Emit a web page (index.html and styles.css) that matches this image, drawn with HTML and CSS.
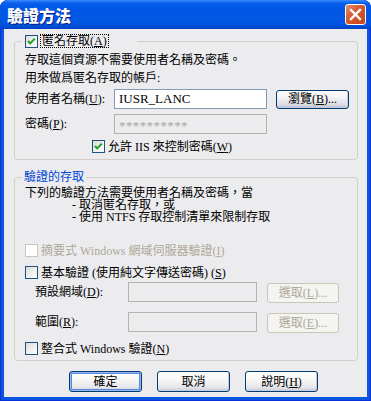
FILE: index.html
```html
<!DOCTYPE html>
<html lang="zh-Hant">
<head>
<meta charset="utf-8">
<title>驗證方法</title>
<link rel="stylesheet" href="styles.css">
</head>
<body>
<div class="window">
  <div class="titlebar">
    <span class="title">驗證方法</span>
    <span class="close"><svg width="19" height="19" viewBox="0 0 19 19"><path d="M5 5 L14 14 M14 5 L5 14" stroke="#fff" stroke-width="2.4" stroke-linecap="square"/></svg></span>
  </div>
  <div class="client">
    <fieldset class="group g1">
      <legend class="legend-check">
        <span class="legend-inner">
          <span class="cb"><svg width="11" height="11" viewBox="0 0 11 11"><path d="M2 5 L4.2 7.4 L8.8 2.6" fill="none" stroke="#21A121" stroke-width="2"/></svg></span>
          <span class="focus">匿名存取(<u>A</u>)</span>
        </span>
      </legend>
      <div class="line l1">存取這個資源不需要使用者名稱及密碼。</div>
      <div class="line l2">用來做爲匿名存取的帳戶:</div>
      <div class="row r-user">
        <span class="lbl">使用者名稱(<u>U</u>):</span>
        <span class="input">IUSR_LANC</span>
        <span class="btn browse">瀏覽(<u>B</u>)...</span>
      </div>
      <div class="row r-pass">
        <span class="lbl">密碼(<u>P</u>):</span>
        <span class="input disabled pw">**********</span>
      </div>
      <div class="check iis">
        <span class="cb"><svg width="11" height="11" viewBox="0 0 11 11"><path d="M2 5 L4.2 7.4 L8.8 2.6" fill="none" stroke="#21A121" stroke-width="2"/></svg></span>
        <span class="ctext">允許 IIS 來控制密碼(<u>W</u>)</span>
      </div>
    </fieldset>

    <fieldset class="group g2">
      <legend class="legend-text">驗證的存取</legend>
      <p class="para">下列的驗證方法需要使用者名稱及密碼，當<br><span class="indent">- 取消匿名存取，或</span><br><span class="indent">- 使用 NTFS 存取控制清單來限制存取</span></p>
      <div class="check digest disabled-text">
        <span class="cb dis"></span>
        <span class="ctext">摘要式 Windows 網域伺服器驗證(<u>I</u>)</span>
      </div>
      <div class="check basic">
        <span class="cb"></span>
        <span class="ctext">基本驗證 (使用純文字傳送密碼) (<u>S</u>)</span>
      </div>
      <div class="row sub r-domain">
        <span class="lbl2">預設網域(<u>D</u>):</span>
        <span class="input disabled w2"></span>
        <span class="btn dis pick">選取(<u>L</u>)...</span>
      </div>
      <div class="row sub r-realm">
        <span class="lbl2">範圍(<u>R</u>):</span>
        <span class="input disabled w2"></span>
        <span class="btn dis pick">選取(<u>E</u>)...</span>
      </div>
      <div class="check integrated">
        <span class="cb"></span>
        <span class="ctext">整合式 Windows 驗證(<u>N</u>)</span>
      </div>
    </fieldset>

    <div class="buttons">
      <span class="btn dlg default">確定</span>
      <span class="btn dlg">取消</span>
      <span class="btn dlg">說明(<u>H</u>)</span>
    </div>
  </div>
</div>
</body>
</html>
```

FILE: styles.css
```css
html, body {
  margin: 0;
  padding: 0;
  background: #ffffff;
}
body {
  font-family: "Liberation Serif", "Noto Sans CJK TC", serif;
  font-size: 12px;
  line-height: 12px;
  color: #000;
}
u { text-decoration: underline; text-underline-offset: 1px; }

.window {
  width: 371px;
  height: 401px;
  display: flex;
  flex-direction: column;
  background: #0A56E0;
  border-radius: 8px 8px 0 0;
  box-shadow: inset 1px 0 0 #0831D9, inset -1px 0 0 #0831D9, inset 0 -1px 0 #0831D9;
  overflow: hidden;
}

.titlebar {
  height: 29px;
  flex: none;
  display: flex;
  align-items: center;
  justify-content: space-between;
  padding: 0 5px 0 7px;
  box-sizing: border-box;
  border-radius: 8px 8px 0 0;
  background: linear-gradient(#3A8CFF 0px, #0A5FEA 3px, #0058E6 8px, #0257E4 18px, #0054E3 24px, #0043C6 29px);
}
.title {
  color: #fff;
  font-family: "Noto Sans CJK TC", sans-serif;
  font-weight: 900;
  font-size: 16px;
  line-height: 16px;
  text-shadow: 1px 1px 0 #0A1E7A;
  margin-top: 1px;
}
.close {
  width: 21px;
  height: 21px;
  box-sizing: border-box;
  border: 1px solid #fff;
  border-radius: 3px;
  background: linear-gradient(135deg, #E88B68 0%, #D5592F 45%, #C5421B 100%);
  display: flex;
  align-items: center;
  justify-content: center;
}

.client {
  flex: 1;
  margin: 0 4px 4px 4px;
  background: #ECECEE;
  padding: 5px 9px 4px 10px;
  display: flex;
  flex-direction: column;
}

.group {
  margin: 0;
  border: 1px solid #D0D0C8;
  border-radius: 4px;
  padding: 0 10px 0 10px;
  min-width: 0;
}
.g1 { padding-bottom: 6px; }
.g2 { margin-top: 11px; padding-bottom: 5px; }

.legend-check {
  padding: 0 0 0 4px;
  margin-left: -4px;
  width: 116px;
  box-sizing: border-box;
  height: 14px;
}
.legend-inner {
  display: flex;
  align-items: center;
  height: 14px;
}
.legend-text {
  padding: 0 2px;
  margin-left: -3px;
  color: #0046D5;
  font-size: 12px;
  line-height: 12px;
}

.cb {
  width: 13px;
  height: 13px;
  box-sizing: border-box;
  border: 1px solid #1C5180;
  background: linear-gradient(135deg, #DCDCD7 0%, #F2F2EF 60%, #FFFFFF 100%);
  display: flex;
  align-items: center;
  justify-content: center;
  flex: none;
}
.cb.dis {
  border-color: #CAC8BB;
  background: #FFFFFF;
}
.focus {
  margin-left: 2px;
  border: 1px dotted #000;
  padding: 0 1px;
  line-height: 12px;
}

.line { height: 12px; white-space: nowrap; }
.l1 { margin-top: 6px; }
.l2 { margin-top: 6px; }

.row {
  display: flex;
  align-items: center;
  height: 20px;
}
.r-user { margin-top: 5px; }
.r-pass { margin-top: 5px; }
.lbl { width: 89px; flex: none; white-space: nowrap; }
.lbl2 { width: 93px; margin-left: 10px; flex: none; white-space: nowrap; }

.input {
  width: 153px;
  height: 20px;
  box-sizing: border-box;
  border: 1px solid #7F9DB9;
  background: #fff;
  padding: 0 4px;
  display: flex;
  align-items: center;
  flex: none;
  font-size: 13px;
}
.input.disabled {
  background: #ECECEE;
  border-color: #B5B3AC;
}
.pw { color: #A7A6A0; font-size: 13px; letter-spacing: 0.4px; padding-top: 3px; }
.w2 { width: 129px; }

.btn {
  display: flex;
  align-items: center;
  justify-content: center;
  box-sizing: border-box;
  border: 1px solid #003C74;
  border-radius: 3px;
  background: linear-gradient(#FFFFFF 0%, #F6F6F3 40%, #ECEBE6 75%, #D6D0C5 100%);
  box-shadow: inset -1px -1px 0 #C9CDDB;
  flex: none;
  white-space: nowrap;
}
.browse {
  width: 73px;
  height: 19px;
  margin-left: 9px;
  background: linear-gradient(#FFFFFF 0%, #F2F2F4 40%, #DCDCE6 80%, #B8BCD0 100%);
}
.btn.dis {
  border-color: #C9C7BA;
  background: #F4F4F0;
  box-shadow: none;
  color: #ACA899;
}
.pick { width: 72px; height: 20px; margin-left: 10px; margin-top: 2px; }

.check {
  display: flex;
  align-items: center;
  height: 13px;
}
.ctext { margin-left: 3px; white-space: nowrap; }
.iis { margin-top: 6px; margin-left: 67px; }
.disabled-text { color: #ACA899; }

.para {
  margin: 4px 0 0 0;
  line-height: 12px;
  white-space: nowrap;
}
.indent { padding-left: 47px; }

.digest { margin-top: 21px; }
.basic { margin-top: 9px; }
.r-domain { margin-top: 3px; }
.r-realm { margin-top: 10px; }
.integrated { margin-top: 10px; }

.buttons {
  display: flex;
  gap: 15px;
  margin-top: 10px;
  padding-left: 55px;
}
.dlg {
  width: 73px;
  height: 21px;
  background: linear-gradient(#FFFFFF 0%, #F6F6F4 45%, #E6E6EC 80%, #C8CCDA 100%);
}
.dlg.default {
  box-shadow: inset 0 0 0 1px #97B6F3, inset 0 0 0 2px #5A87E0;
}
```
